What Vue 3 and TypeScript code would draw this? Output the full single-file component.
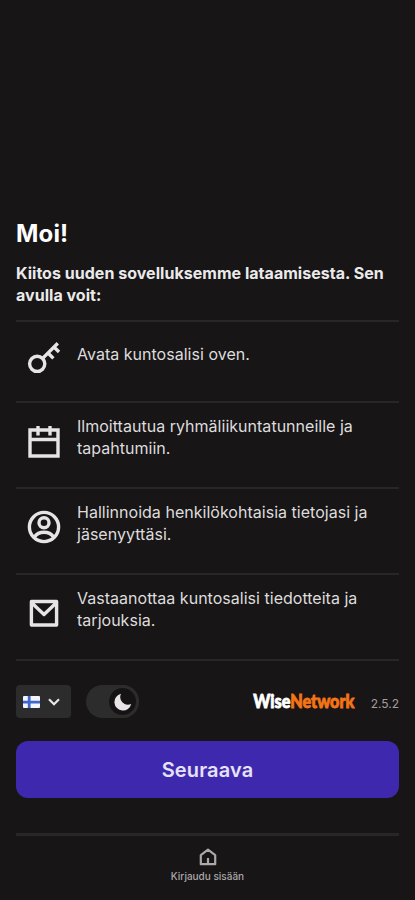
<script lang="ts" setup>
import { ref } from "vue";

type IconName = "key" | "calendar" | "person" | "mail";

interface Feature {
  icon: IconName;
  text: string;
}

const features: Feature[] = [
  { icon: "key", text: "Avata kuntosalisi oven." },
  { icon: "calendar", text: "Ilmoittautua ryhmäliikuntatunneille ja tapahtumiin." },
  { icon: "person", text: "Hallinnoida henkilökohtaisia tietojasi ja jäsenyyttäsi." },
  { icon: "mail", text: "Vastaanottaa kuntosalisi tiedotteita ja tarjouksia." },
];

const version = "2.5.2";
const dark = ref(true);
</script>

<template>
  <div class="welcome">
    <main class="content">
      <h1>Moi!</h1>
      <p class="lead">Kiitos uuden sovelluksemme lataamisesta. Sen avulla voit:</p>

      <ul class="features">
        <li v-for="feature in features" :key="feature.icon" :class="['feature', `--${feature.icon}`]">
          <svg class="feature-icon" viewBox="0 0 36 36" aria-hidden="true">
            <template v-if="feature.icon === 'key'">
              <circle cx="11.2" cy="23.8" r="7.6" />
              <path d="M16.6 18.4 31.8 3.2M22 13l5.400 5.400M28 7l5 5" />
            </template>
            <template v-else-if="feature.icon === 'calendar'">
              <path d="M4 7h28v26H4zM4 16.500h28M12 3v9.500M24 3v9.500" />
            </template>
            <template v-else-if="feature.icon === 'person'">
              <circle cx="18" cy="18" r="14.6" />
              <circle cx="18" cy="13.7" r="5" />
              <path d="M8.500 28c2.200-3.300 5.500-4.700 9.500-4.700s7.300 1.400 9.500 4.700" />
            </template>
            <template v-else>
              <path d="M5.400 6.500h25.200v23.500H5.400zM5.400 7.500 18 19.500 30.600 7.500" stroke-linejoin="round" />
            </template>
          </svg>
          <span>{{ feature.text }}</span>
        </li>
      </ul>

      <div class="settings">
        <button class="language" type="button" aria-label="Suomi">
          <svg class="flag" viewBox="0 0 17 12" aria-hidden="true">
            <rect width="17" height="12" rx="1" fill="#f3f5fb" />
            <path d="M6.200 0v12M0 6.200h17" stroke="#3f66cb" stroke-width="2.800" />
          </svg>
          <svg class="chevron" viewBox="0 0 12 8" aria-hidden="true">
            <path d="m1 1.200 5 5 5-5" />
          </svg>
        </button>
        <button
          :class="['theme', { '--dark': dark }]"
          type="button"
          role="switch"
          :aria-checked="dark"
          @click="dark = !dark"
        >
          <span class="knob">
            <svg viewBox="0 0 18 18" aria-hidden="true">
              <path d="M7 .8A8.500 8.500 0 1 0 17.200 11 7.700 7.700 0 0 1 7 .8z" />
            </svg>
          </span>
        </button>
        <div class="brand"><span>Wise</span><span class="accent">Network</span></div>
        <span class="version">{{ version }}</span>
      </div>

      <button class="next" type="button">Seuraava</button>
    </main>

    <nav class="tabs">
      <a class="tab">
        <svg viewBox="0 0 18 18" aria-hidden="true">
          <path d="M1.800 7.200 9 1.600l7.200 5.600v9H1.800zM9 10v6" />
        </svg>
        <span>Kirjaudu sisään</span>
      </a>
    </nav>
  </div>
</template>

<style>
body {
  margin: 0;
  background: #171516;
}
</style>

<style scoped>
.welcome {
  display: flex;
  flex-direction: column;
  box-sizing: border-box;
  height: 900px;
  padding: 218px 16px 0;
  background: #171516;
  color: #dedcdd;
  font-family: Inter, "Liberation Sans", sans-serif;
  overflow: hidden;
}

button {
  border: none;
  padding: 0;
  font: inherit;
}

h1 {
  margin: 0;
  color: #fff;
  font-size: 24px;
  font-weight: 700;
  line-height: 32px;
  letter-spacing: 0.15px;
}

.lead {
  margin: 12px 0 14px;
  color: #ebeaeb;
  font-size: 16px;
  font-weight: 700;
  line-height: 22px;
  letter-spacing: 0.03px;
}

.features {
  list-style: none;
  margin: 0;
  padding: 0;
  border-bottom: 2px solid #282627;
}

.feature {
  display: flex;
  align-items: center;
  gap: 15px;
  box-sizing: border-box;
  height: 86px;
  padding: 0 0 16px 10px;
  border-top: 2px solid #282627;
  font-size: 16px;
  line-height: 22px;
  letter-spacing: 0.02px;

  &.--key {
    height: 81px;
  }
}

.feature-icon {
  flex: none;
  width: 36px;
  height: 36px;
  margin-top: 8px;
  fill: none;
  stroke: #e6e4e5;
  stroke-width: 3.4;
}

.settings {
  display: flex;
  align-items: center;
  height: 33px;
  margin-top: 24px;
}

.language {
  display: flex;
  align-items: center;
  gap: 8px;
  box-sizing: border-box;
  width: 55px;
  height: 33px;
  padding-left: 7px;
  border-radius: 4px;
  background: #2c2c2d;
}

.flag {
  width: 17px;
  height: 12px;
}

.chevron {
  width: 12px;
  height: 8px;
  fill: none;
  stroke: #e9e8e9;
  stroke-width: 2.2;
}

.theme {
  display: flex;
  width: 53px;
  height: 33px;
  margin-left: 15px;
  border-radius: 17px;
  background: #2c2c2d;

  &.--dark {
    justify-content: flex-end;
  }
}

.knob {
  display: grid;
  place-items: center;
  box-sizing: border-box;
  width: 33px;
  height: 33px;
  border: 3px solid #2c2c2d;
  border-radius: 50%;
  background: #151314;

  svg {
    width: 18px;
    height: 18px;
    fill: #e9e4e7;
  }
}

.brand {
  margin-left: auto;
  color: #fff;
  font-family: Lato, sans-serif;
  font-size: 18px;
  font-weight: 900;
  line-height: 33px;
  -webkit-text-stroke: 0.8px currentColor;
  transform: scaleX(0.9);
  transform-origin: right;
}

.accent {
  color: #f47516;
}

.version {
  margin-left: 16px;
  padding-top: 3px;
  color: #a09e9f;
  font-size: 12px;
}

.next {
  display: block;
  width: 100%;
  height: 57px;
  margin-top: 23px;
  border-radius: 12px;
  background: #3e29ae;
  color: #e6e2f7;
  font-size: 20px;
  font-weight: 600;
  letter-spacing: 0.15px;
}

.tabs {
  display: flex;
  justify-content: center;
  margin-top: 35px;
  border-top: 3px solid #282627;
}

.tab {
  display: flex;
  flex-direction: column;
  align-items: center;
  gap: 3px;
  padding-top: 12px;
  color: #aaa8a9;
  font-size: 10px;
  font-weight: 500;
  line-height: 14px;

  svg {
    width: 18px;
    height: 18px;
    margin-left: 1px;
    fill: none;
    stroke: currentColor;
    stroke-width: 2.2;
    stroke-linejoin: round;
  }
}
</style>
